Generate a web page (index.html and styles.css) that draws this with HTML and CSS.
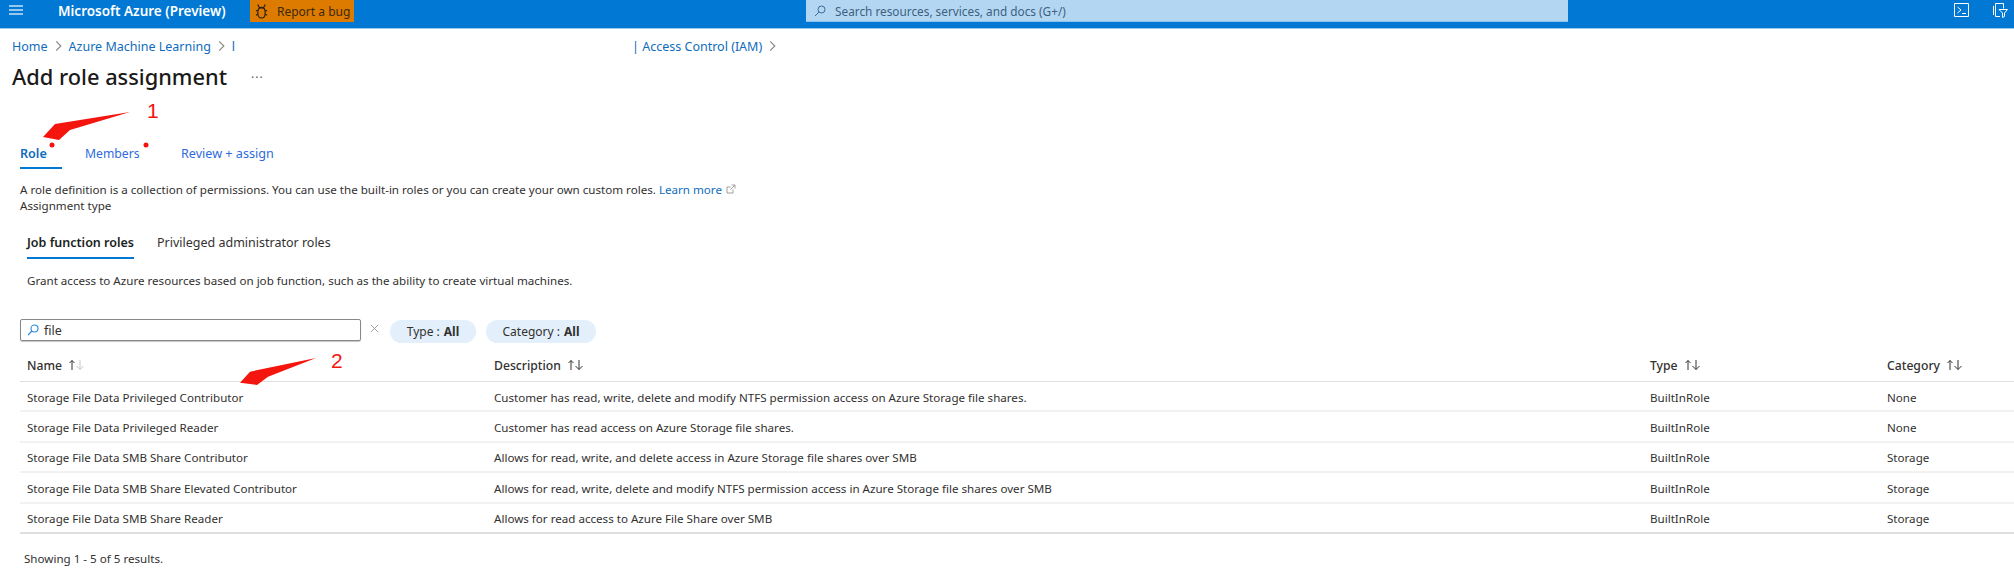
FILE: index.html
```html
<!DOCTYPE html>
<html lang="en">
<head>
<meta charset="utf-8">
<title>Add role assignment</title>
<link rel="stylesheet" href="styles.css">
</head>
<body>
<div class="page">
  <svg width="0" height="0" class="defs">
    <symbol id="sort" viewBox="0 0 16 12">
      <path class="up" d="M4 11V1.500M1.500 4l2.500-2.500L6.500 4"/>
      <path class="down" d="M12 1v9.500M8.500 7l3.500 3.500L15.500 7"/>
    </symbol>
    <symbol id="mag" viewBox="0 0 12 12">
      <circle cx="7.500" cy="4.500" r="3.500"/>
      <path d="M5 7L1 11"/>
    </symbol>
  </svg>
  <header class="topbar">
    <svg class="menu" viewBox="0 0 14 10"><path d="M0 1h14M0 5h14M0 9h14"/></svg>
    <span class="brand">Microsoft Azure (Preview)</span>
    <button class="bug">
      <svg class="bug-icon" viewBox="0 0 14 16"><path d="M3 .5l1.500 3M11 .5L9.500 3.500M4 4h6M1 7h2M13 7h-2M1 12l2-1M13 12l-2-1"/><path d="M7 3.500c2.500 0 4 2.500 4 6s-1.500 5.500-4 5.500-4-2-4-5.500 1.500-6 4-6z"/></svg>
      <span>Report a bug</span>
    </button>
    <div class="search">
      <svg class="search-icon"><use href="#mag"/></svg>
      <span>Search resources, services, and docs (G+/)</span>
    </div>
    <div class="actions">
      <svg class="terminal" viewBox="0 0 15 14"><path d="M.5.500h14v13H.5zM3.500 4l3.500 3-3.500 3M8 10.500h4"/></svg>
      <svg class="feedback" viewBox="0 0 15 15"><path d="M2.500.500h8v5M2.500.500v13H7M.5 3v9M6 6.500h8.500l-3 3.500v3.500l-2 1V10z"/></svg>
    </div>
  </header>

  <nav class="crumbs">
    <a class="crumb">Home</a>
    <svg class="chev" viewBox="0 0 6 10"><path d="M1 1l4 4-4 4"/></svg>
    <a class="crumb">Azure Machine Learning</a>
    <svg class="chev" viewBox="0 0 6 10"><path d="M1 1l4 4-4 4"/></svg>
    <a class="crumb">l</a>
    <a class="crumb crumb-far">| Access Control (IAM)</a>
    <svg class="chev" viewBox="0 0 6 10"><path d="M1 1l4 4-4 4"/></svg>
  </nav>

  <div class="title-row">
    <h1 class="title">Add role assignment</h1>
    <span class="more">···</span>
  </div>

  <div class="tabs">
    <a class="tab tab-role">Role</a>
    <a class="tab tab-members">Members</a>
    <a class="tab tab-review">Review + assign</a>
  </div>

  <p class="intro">A role definition is a collection of permissions. You can use the built-in roles or you can create your own custom roles. <a class="learn">Learn more</a>
    <svg class="ext" viewBox="0 0 10 10"><path d="M7 5.500V9H1V3h3.500M5.500 1H9v3.500M9 1L4.500 5.500"/></svg>
  </p>
  <p class="assign">Assignment type</p>

  <div class="subtabs">
    <a class="subtab subtab-on">Job function roles</a>
    <a class="subtab">Privileged administrator roles</a>
  </div>

  <p class="grant">Grant access to Azure resources based on job function, such as the ability to create virtual machines.</p>

  <div class="filters">
    <div class="filter-input">
      <svg class="input-icon"><use href="#mag"/></svg>
      <span>file</span>
    </div>
    <svg class="clear" viewBox="0 0 10 10"><path d="M1 1l8 8M9 1l-8 8"/></svg>
    <span class="pill pill-type">Type : <b>All</b></span>
    <span class="pill pill-cat">Category : <b>All</b></span>
  </div>

  <div class="table">
    <div class="row head">
      <span class="th">Name <svg class="sort sort-asc"><use href="#sort"/></svg></span>
      <span class="th">Description <svg class="sort"><use href="#sort"/></svg></span>
      <span class="th">Type <svg class="sort"><use href="#sort"/></svg></span>
      <span class="th">Category <svg class="sort"><use href="#sort"/></svg></span>
    </div>
    <div class="row"><span>Storage File Data Privileged Contributor</span><span>Customer has read, write, delete and modify NTFS permission access on Azure Storage file shares.</span><span>BuiltInRole</span><span>None</span></div>
    <div class="row"><span>Storage File Data Privileged Reader</span><span>Customer has read access on Azure Storage file shares.</span><span>BuiltInRole</span><span>None</span></div>
    <div class="row"><span>Storage File Data SMB Share Contributor</span><span>Allows for read, write, and delete access in Azure Storage file shares over SMB</span><span>BuiltInRole</span><span>Storage</span></div>
    <div class="row"><span>Storage File Data SMB Share Elevated Contributor</span><span>Allows for read, write, delete and modify NTFS permission access in Azure Storage file shares over SMB</span><span>BuiltInRole</span><span>Storage</span></div>
    <div class="row row-last"><span>Storage File Data SMB Share Reader</span><span>Allows for read access to Azure File Share over SMB</span><span>BuiltInRole</span><span>Storage</span></div>
  </div>

  <p class="showing">Showing 1 - 5 of 5 results.</p>

  <svg class="marks" viewBox="0 0 2014 572">
    <polygon points="43,137 55,124 130,112 70,130 59,140"/>
    <polygon points="240,382.700 250,371.700 316,358 268,376.700 257,385"/>
    <circle cx="52" cy="145" r="2.500"/>
    <circle cx="146" cy="145" r="2.500"/>
  </svg>
  <span class="note note-1">1</span>
  <span class="note note-2">2</span>
</div>
</body>
</html>
```

FILE: styles.css
```css
* { box-sizing: border-box; }
html, body { margin: 0; padding: 0; background: #fff; }
body { font-family: "Noto Sans", "Open Sans", sans-serif; font-size: 11.600px; color: #323130; }
p, h1 { margin: 0; }
.page { position: relative; width: 2014px; height: 572px; overflow: hidden; }
.defs { position: absolute; }

.topbar { display: flex; align-items: flex-start; height: 29px; background: #0078d4; border-bottom: 1px solid #9ccbee; color: #fff; }
.menu { width: 14px; height: 10px; margin: 5px 0 0 9px; fill: none; stroke: #c8e2f6; stroke-width: 1.500; }
.brand { margin: 1px 0 0 35px; width: 192px; font-size: 13.500px; line-height: 20px; font-weight: 600; white-space: nowrap; }
.bug { display: flex; align-items: center; gap: 9px; width: 104px; height: 22px; margin: 0; padding: 0 0 0 5px; border: 0; background: #dd7a00; color: #3b2a10; font: inherit; font-size: 12px; white-space: nowrap; }
.bug-icon { width: 13px; height: 15px; fill: none; stroke: #2b2114; stroke-width: 1.300; }
.search { display: flex; align-items: center; width: 762px; height: 22px; margin-left: 452px; padding-left: 8px; background: #b3d7f2; border-bottom: 1px solid #8cc3ec; color: #3f5f7f; font-size: 11.800px; }
.search-icon { width: 12px; height: 12px; margin-right: 9px; fill: none; stroke: #3a6a99; stroke-width: 1; }
.actions { display: flex; gap: 24px; margin-left: auto; padding: 3px 6px 0 0; }
.terminal { width: 15px; height: 14px; fill: none; stroke: #fff; stroke-width: 1; }
.feedback { width: 15px; height: 15px; fill: none; stroke: #fff; stroke-width: 1; }

.crumbs { display: flex; align-items: center; gap: 7px; height: 18px; margin-top: 8px; padding-left: 12px; font-size: 12.500px; color: #0f6cbd; }
.crumb-far { margin-left: 390px; }
.chev { width: 7px; height: 12px; fill: none; stroke: #8a8886; stroke-width: 1; }

.title-row { display: flex; align-items: center; height: 30px; margin-top: 7px; padding-left: 12px; }
.title { width: 239px; font-size: 21.800px; line-height: 30px; font-weight: 500; color: #1b1a19; }
.more { font-size: 12px; letter-spacing: 1px; color: #605e5c; }

.tabs { display: flex; height: 29px; margin-top: 48px; padding-left: 20px; }
.tab { display: block; height: 29px; line-height: 28px; font-size: 12.600px; color: #2f6bdc; }
.tab-role { width: 65px; font-weight: 600; color: #0f6cbd; position: relative; }
.tab-role::after { content: ""; position: absolute; left: 0; bottom: 0; width: 42px; height: 2px; background: #0078d4; }
.tab-members { width: 96px; font-size: 12.200px; }

.intro { margin-top: 13px; padding-left: 20px; line-height: 16px; }
.learn { color: #0f6cbd; }
.ext { width: 10px; height: 10px; margin-left: 1px; fill: none; stroke: #8a8886; stroke-width: .8; }
.assign { padding-left: 20px; line-height: 16px; }

.subtabs { display: flex; gap: 23px; height: 29px; margin-top: 16px; padding-left: 27px; font-size: 12.500px; }
.subtab { height: 29px; line-height: 26px; }
.subtab-on { font-weight: 600; color: #201f1e; border-bottom: 2px solid #0078d4; }

.grant { margin-top: 14px; padding-left: 27px; line-height: 16px; }

.filters { display: flex; align-items: flex-start; height: 24px; margin-top: 30px; padding-left: 20px; }
.filter-input { display: flex; align-items: center; width: 341px; height: 22px; padding-left: 6px; border: 1px solid #8a8886; border-radius: 2px; box-shadow: 0 1px 1px #c8c6c4; color: #323130; font-size: 12.500px; }
.input-icon { width: 12px; height: 12px; margin-right: 5px; fill: none; stroke: #2b88d8; stroke-width: 1.100; }
.clear { width: 9px; height: 9px; margin: 5px 11px 0 9px; fill: none; stroke: #8a8886; stroke-width: .9; }
.pill { display: flex; align-items: center; justify-content: center; gap: 4px; height: 23px; margin-top: 1px; border-radius: 12px; background: #e3f0fb; font-size: 12px; }
.pill b { font-weight: 700; }
.pill-type { width: 86px; margin-right: 10px; }
.pill-cat { width: 110px; }

.table { margin: 6px 0 0 20px; }
.row { display: grid; grid-template-columns: 467px 1156px 237px 1fr; align-items: center; height: 30.400px; padding: 2px 0 0 7px; border-bottom: 2px solid #f3f2f1; }
.head { height: 33px; padding-top: 0; font-weight: 500; color: #323130; border-bottom: 1px solid #e1dfdd; }
.row-last { border-bottom: 2px solid #e1dfdd; }
.th { display: flex; align-items: center; gap: 6px; font-size: 12.200px; }
.sort { width: 16px; height: 12px; fill: none; stroke: #323130; stroke-width: 1; }
.down { stroke: var(--down, #323130); }
.sort-asc { --down: #c8c6c4; }

.showing { margin-top: 17px; padding-left: 24px; line-height: 16px; }

.marks { position: absolute; left: 0; top: 0; width: 2014px; height: 572px; fill: #f5150f; pointer-events: none; }
.note { position: absolute; font-family: "Liberation Sans", sans-serif; font-size: 21px; line-height: 21px; color: #f5150f; }
.note-1 { left: 147px; top: 100px; }
.note-2 { left: 331px; top: 350px; }
```
